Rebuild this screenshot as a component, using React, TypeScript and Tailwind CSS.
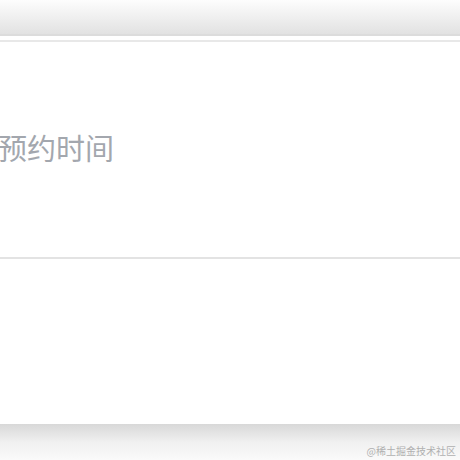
export default function App() {
  return (
    <div className="relative flex h-[460px] w-[460px] flex-col overflow-hidden bg-white font-['Noto_Sans_CJK_SC','Noto_Sans',sans-serif]">
      {/* header shade */}
      <div className="h-[34px] shrink-0 bg-gradient-to-b from-[#fdfdfd] to-[#e2e2e2]" />
      <div className="h-[2px] shrink-0 bg-[#dcdcdc]" />
      <div className="h-[4px] shrink-0 bg-white" />
      <div className="h-[2px] shrink-0 bg-[#e8e8e8]" />

      {/* picker title */}
      <div className="flex h-[215px] shrink-0 items-center pb-[4px]">
        <span className="ml-[-60px] whitespace-nowrap text-[29px] leading-none text-[#a3a7ae]">选择预约时间</span>
      </div>
      <div className="h-[2px] shrink-0 bg-[#e3e3e3]" />

      <div className="flex-1 bg-white" />

      {/* bottom shade */}
      <div className="relative h-[36px] shrink-0 bg-gradient-to-b from-[#d8d8d8] via-[#f0f0f0] to-[#fafafa]">
        <span className="absolute bottom-[4px] right-[4px] text-[10px] leading-none text-[#b0b0b0]">@稀土掘金技术社区</span>
      </div>
    </div>
  );
}
